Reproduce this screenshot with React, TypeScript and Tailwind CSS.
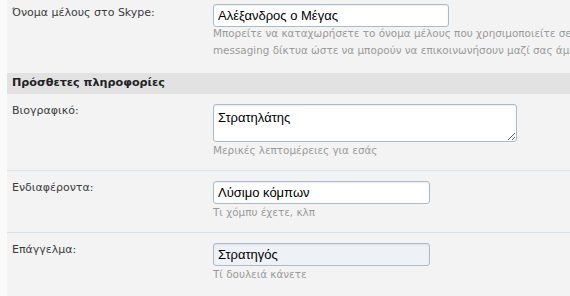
import React from 'react';

const labelFont = 'font-["DejaVu_Sans",Verdana,sans-serif]';

function Field({
  label,
  children,
  help,
  divider = true,
}: {
  label: string;
  children: React.ReactNode;
  help: React.ReactNode;
  divider?: boolean;
}) {
  return (
    <div className={`flex pt-[10px] pb-[12px] ${divider ? 'border-b border-[#d5e3ef]' : ''}`}>
      <div className={`w-[206px] shrink-0 pl-[5px] text-[11px] leading-[14px] text-[#3b3b3b] ${labelFont}`}>
        {label}
      </div>
      <div className="flex flex-col">
        {children}
        <div className={`text-[10.4px] leading-[16px] text-[#9a9a9a] whitespace-nowrap ${labelFont}`}>{help}</div>
      </div>
    </div>
  );
}

const inputCls =
  'h-[23px] rounded-[3px] border border-[#a9bccf] px-[4px] text-[13px] text-black outline-none font-["Liberation_Sans",Arial,sans-serif] shadow-[inset_0_1px_2px_rgba(0,0,0,0.08)]';

export default function App() {
  return (
    <div className="w-[570px] h-[296px] overflow-hidden flex bg-[#fafafa]">
      <div className="w-[7px] shrink-0" />
      <div className="flex-1 bg-[#f3f3f3] overflow-hidden">
        {/* Skype row */}
        <div className="flex pt-[4px] pb-[14px]">
          <div className={`w-[206px] shrink-0 pl-[5px] pt-[2px] text-[11px] leading-[14px] text-[#3b3b3b] ${labelFont}`}>
            Όνομα μέλους στο Skype:
          </div>
          <div className="flex flex-col">
            <input readOnly value="Αλέξανδρος ο Μέγας" className={`${inputCls} w-[236px] bg-white`} />
            <div className={`-mt-[2px] text-[10.4px] leading-[17px] text-[#9a9a9a] whitespace-nowrap ${labelFont}`}>
              <div>Μπορείτε να καταχωρήσετε το όνομα μέλους που χρησιμοποιείτε σε άλλα instant</div>
              <div>messaging δίκτυα ώστε να μπορούν να επικοινωνήσουν μαζί σας άμεσα.</div>
            </div>
          </div>
        </div>

        {/* Section header */}
        <div className={`h-[21px] bg-[#e2e2e2] pl-[5px] flex items-center text-[11.2px] font-bold text-[#222] ${labelFont}`}>
          Πρόσθετες πληροφορίες
        </div>

        <Field label="Βιογραφικό:" help="Μερικές λεπτομέρειες για εσάς">
          <textarea
            readOnly
            value="Στρατηλάτης"
            className={`${inputCls} w-[304px] h-[38px] py-[3px] bg-white resize`}
          />
        </Field>

        <Field label="Ενδιαφέροντα:" help="Τι χόμπυ έχετε, κλπ">
          <input readOnly value="Λύσιμο κόμπων" className={`${inputCls} w-[217px] bg-white`} />
        </Field>

        <Field label="Επάγγελμα:" help="Τί δουλειά κάνετε" divider={false}>
          <input readOnly value="Στρατηγός" className={`${inputCls} w-[217px] bg-[#eef2f6]`} />
        </Field>
      </div>
    </div>
  );
}
